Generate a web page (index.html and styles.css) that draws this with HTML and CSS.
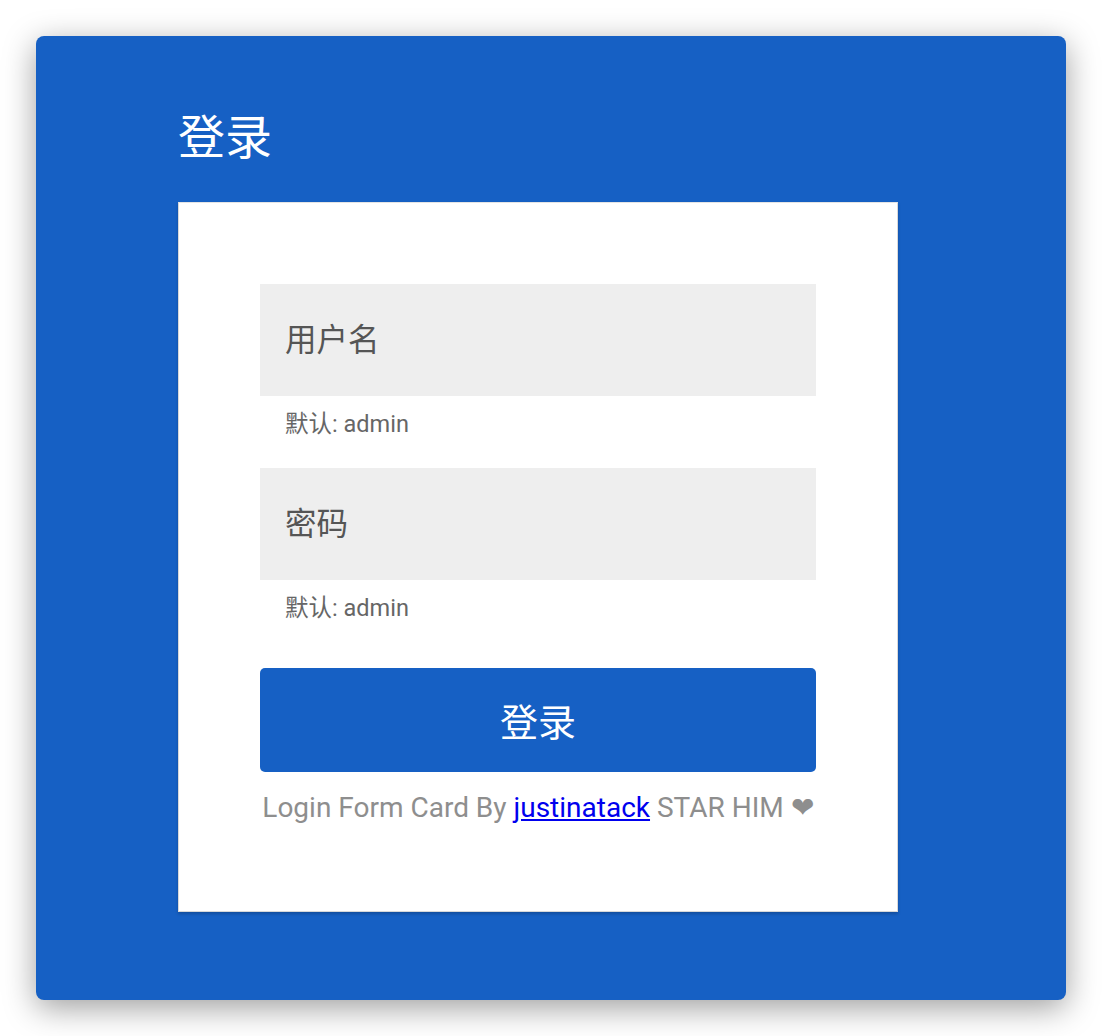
FILE: index.html
```html
<!DOCTYPE html>
<html lang="zh">
<head>
<meta charset="utf-8">
<link rel="stylesheet" href="styles.css">
</head>
<body>
<div class="panel">
  <h1 class="title">登录</h1>
  <div class="card">
    <div class="field">用户名</div>
    <div class="hint">默认: admin</div>
    <div class="field">密码</div>
    <div class="hint hint-last">默认: admin</div>
    <button class="btn">登录</button>
    <p class="footer">Login Form Card By <a href="#">justinatack</a> STAR HIM <span class="heart">❤</span></p>
  </div>
</div>
</body>
</html>
```
FILE: styles.css
```css
html, body {
  margin: 0;
  padding: 0;
  background: #ffffff;
}
body {
  padding: 36px;
  font-family: Roboto, "Noto Sans CJK SC", sans-serif;
}
.panel {
  width: 1030px;
  height: 964px;
  box-sizing: border-box;
  background: #1660c4;
  border-radius: 8px;
  box-shadow: 0 8px 32px rgba(0,0,0,0.38);
  padding: 68px 0 0 142px;
}
.title {
  margin: 0 0 38px 0;
  font-weight: 400;
  font-size: 47px;
  line-height: 60px;
  color: #ffffff;
  font-family: "Noto Sans CJK SC", sans-serif;
}
.card {
  width: 720px;
  height: 710px;
  box-sizing: border-box;
  background: #ffffff;
  padding: 82px 82px 0 82px;
  border: 1px solid #d8d8d8;
  border-top-color: #e4e4e4;
  box-shadow: 0 2px 3px rgba(0,0,0,0.2);
}
.card > * {
  margin-left: -1px;
  margin-right: -1px;
}
.field {
  height: 112px;
  background: #eeeeee;
  padding-left: 25px;
  font-size: 31.5px;
  line-height: 106px;
  color: #555555;
  font-family: "Noto Sans CJK SC", sans-serif;
}
.card > .field:first-child {
  margin-top: -1px;
}
.hint {
  margin: 13px 0 29px 0;
  padding-left: 24px;
  font-size: 23.5px;
  line-height: 30px;
  color: #666666;
}
.card > .hint-last {
  margin-bottom: 45px;
}
.btn {
  display: block;
  width: calc(100% + 2px);
  height: 104px;
  border: none;
  border-radius: 5px;
  background: #1660c4;
  color: #ffffff;
  font-family: "Noto Sans CJK SC", sans-serif;
  font-size: 38px;
  line-height: 100px;
  padding: 0;
}
.footer {
  margin: 21px 0 0 0;
  font-size: 28px;
  line-height: 30px;
  color: #8e8e8e;
  text-align: center;
  white-space: nowrap;
}
.card > .footer {
  margin-left: -20px;
  margin-right: -20px;
}
.footer a {
  color: #0000ee;
}
.heart {
  color: #8e8e8e;
}
```
